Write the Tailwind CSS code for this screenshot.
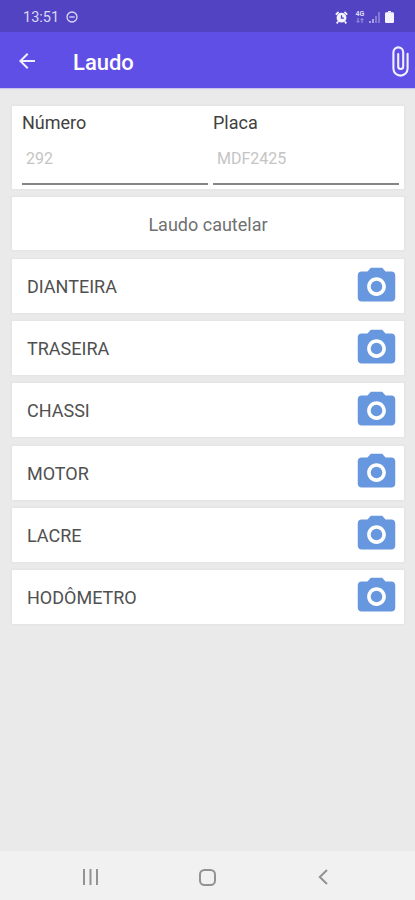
<!DOCTYPE html>
<html lang="pt-BR">
<head>
    <meta charset="UTF-8">
    <meta name="viewport" content="width=device-width, initial-scale=1.0">
    <title>Laudo</title>
    <script src="https://cdn.jsdelivr.net/npm/@tailwindcss/browser@4"></script>
</head>
<body class="bg-[#eaeaea] h-[900px] flex flex-col overflow-hidden font-['Roboto',sans-serif]">
    <!-- Status bar -->
    <div class="h-8 shrink-0 bg-[#5243c2] flex items-center justify-between pl-[23px] pr-[21px] pt-[2px] text-[#dcd8f6]">
        <div class="flex items-center gap-[7px]">
            <span class="text-[14.5px] leading-none pt-[2px]">13:51</span>
            <svg class="w-3 h-3" viewBox="0 0 12 12" fill="none" stroke="currentColor" stroke-width="1.3">
                <circle cx="6" cy="6" r="5"/>
                <path d="M3.3 6h5.4"/>
            </svg>
        </div>
        <div class="flex items-center">
            <svg class="w-[13px] h-[13px]" viewBox="0 0 13 13">
                <circle cx="6.5" cy="6.7" r="4.9" fill="#f4f2ff"/>
                <path d="M.8 3.6 3.6 1M12.2 3.6 9.4 1M3 10.5 1.8 12.4M10 10.5l1.2 1.9" stroke="#f4f2ff" stroke-width="1.8"/>
                <path d="M6.5 4.2v2.9h2.4" fill="none" stroke="#5243c2" stroke-width="1.3"/>
            </svg>
            <div class="ml-[7px] w-[10px] flex flex-col items-center">
                <span class="text-[7px] leading-[7px] font-bold">4G</span>
                <svg class="w-2 h-[5px] opacity-60" viewBox="0 0 8 5" fill="none" stroke="currentColor">
                    <path d="M2 0v4M.5 3 2 4.5 3.5 3M6 5V1M4.5 2 6 .5 7.5 2"/>
                </svg>
            </div>
            <svg class="ml-[4px] w-[11px] h-[11px]" viewBox="0 0 11 11" stroke="currentColor" stroke-width="1.6">
                <path d="M1 11V9M4 11V7" opacity=".8"/>
                <path d="M7 11V4M10 11V0" opacity=".45"/>
            </svg>
            <svg class="ml-[5px] w-[9px] h-3" viewBox="0 0 9 12" fill="#f4f2ff">
                <path d="M3 0h3v1.5H3z"/>
                <rect y="1.3" width="9" height="10.7" rx="1.3"/>
            </svg>
        </div>
    </div>

    <!-- App bar -->
    <header class="h-14 shrink-0 bg-[#604fe6] flex items-center pl-[15px] pr-[6px] pt-[2px] text-white shadow-[0_1px_1px_#c9c6ec]">
        <svg class="w-6 h-6" viewBox="0 0 24 24" fill="#f1efff">
            <path d="M20 11H7.83l5.59-5.59L12 4l-8 8 8 8 1.41-1.41L7.83 13H20v-2z"/>
        </svg>
        <h1 class="ml-[34px] text-[22px] leading-none font-medium pt-[3px]">Laudo</h1>
        <svg class="ml-auto w-[17px] h-[31px]" viewBox="0 0 17 31" fill="none" stroke="#f1efff" stroke-width="2.1" stroke-linecap="round">
            <path d="M15.6 7.8V22.5a7.1 7.1 0 0 1-14.2 0V6.3a4.9 4.9 0 0 1 9.8 0V20.5a2.5 2.5 0 0 1-5 0V8"/>
        </svg>
    </header>

    <main class="flex-1 pt-[18px] pl-3 pr-[11px]">
        <section class="h-[83px] bg-white rounded-[1px] shadow-[0_0_2px_1px_#e3e3e3] px-[10px] pr-[5px] grid grid-cols-2 gap-[5px]">
            <div class="flex flex-col border-b-2 border-[#858585] h-[79px]">
                <span class="mt-[6px] text-[18px] leading-[21px] text-[#414141]">Número</span>
                <span class="mt-[17px] ml-1 text-[16px] leading-[18px] text-[#c4c4c4]">292</span>
            </div>
            <div class="flex flex-col border-b-2 border-[#858585] h-[79px]">
                <span class="mt-[6px] text-[18px] leading-[21px] text-[#414141]">Placa</span>
                <span class="mt-[17px] ml-1 text-[16px] leading-[18px] text-[#c4c4c4]">MDF2425</span>
            </div>
        </section>

        <section class="mt-2 h-[53px] bg-white rounded-[1px] shadow-[0_0_2px_1px_#e3e3e3] flex items-center justify-center pt-[2px] text-[18px] text-[#707070]">Laudo cautelar</section>

        <ul id="photoList" class="mt-[9px] flex flex-col gap-[8.2px]"></ul>
    </main>

    <!-- Navigation bar -->
    <nav class="h-[49px] shrink-0 bg-[#f1f1f1] grid grid-cols-[1fr_auto_1fr] items-center px-[82px] pt-[3px] text-[#929292]">
        <svg class="w-[17px] h-4" viewBox="0 0 17 16" stroke="currentColor" stroke-width="2">
            <path d="M2 0v16M8.5 0v16M15 0v16"/>
        </svg>
        <svg class="w-[17px] h-[17px] -ml-px" viewBox="0 0 17 17" fill="none" stroke="currentColor" stroke-width="2">
            <rect x="1" y="1" width="15" height="15" rx="4.5"/>
        </svg>
        <svg class="justify-self-end mr-[5px] w-[10px] h-4" viewBox="0 0 10 16" fill="none" stroke="currentColor" stroke-width="2">
            <path d="M9 1 1.8 8 9 15"/>
        </svg>
    </nav>

    <script>
        const photos = ['DIANTEIRA', 'TRASEIRA', 'CHASSI', 'MOTOR', 'LACRE', 'HODÔMETRO'];
        const photoList = document.getElementById('photoList');

        photos.forEach(name => {
            const item = document.createElement('li');
            item.className = 'h-[54px] bg-white rounded-[1px] shadow-[0_0_2px_1px_#e3e3e3] flex items-center justify-between pl-[15px] pr-[5px]';
            item.innerHTML = `
                <span class="text-[18px] text-[#505050] pt-px">${name}</span>
                <svg class="w-[45px] h-[45px]" viewBox="0 0 24 24" fill="#6797df">
                    <circle cx="12" cy="12" r="3.1"/>
                    <path d="M9 2 7.17 4H4c-1.1 0-2 .9-2 2v12c0 1.1.9 2 2 2h16c1.1 0 2-.9 2-2V6c0-1.1-.9-2-2-2h-3.17L15 2H9zm3 15c-2.76 0-5-2.24-5-5s2.24-5 5-5 5 2.24 5 5-2.24 5-5 5z"/>
                </svg>
            `;
            photoList.appendChild(item);
        });
    </script>
</body>
</html>
